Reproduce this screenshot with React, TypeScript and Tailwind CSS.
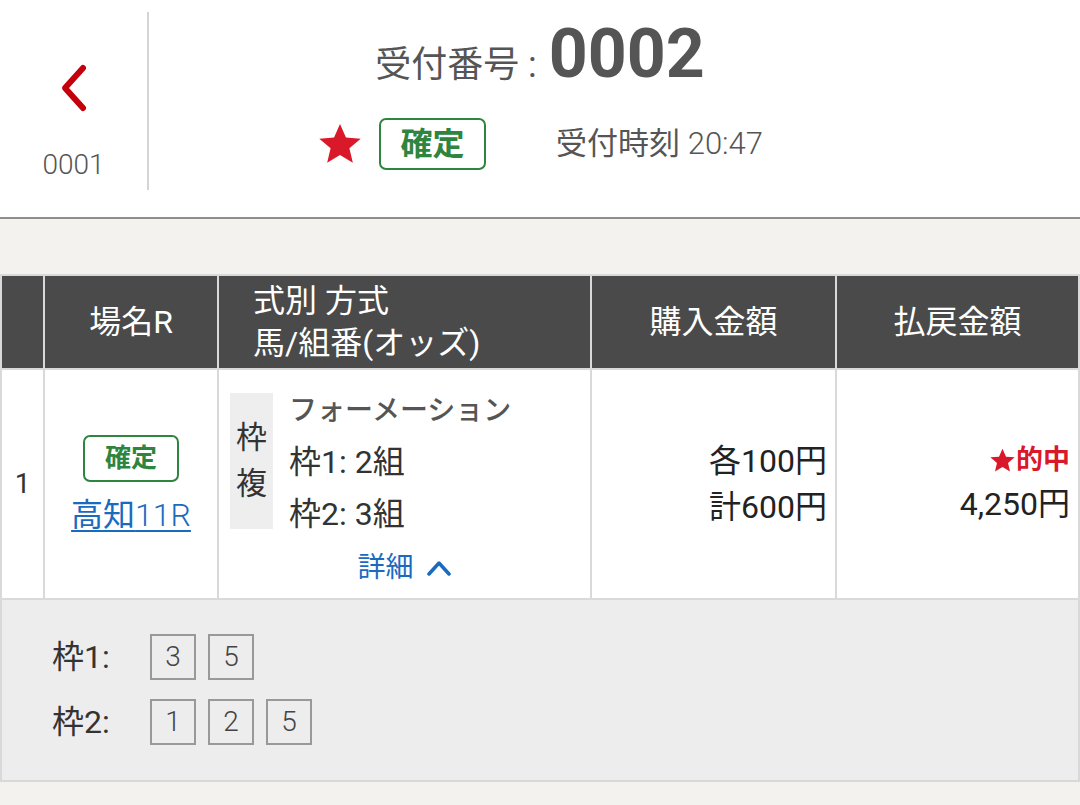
import React from 'react'

const font = { fontFamily: 'Roboto, "Noto Sans CJK JP", sans-serif' }

function Star({ className }: { className?: string }) {
  return (
    <svg viewBox="0 0 24 24" className={className} fill="currentColor">
      <path d="M12 1.5l3.1 7.1 7.7.6-5.9 5 1.8 7.6L12 17.8l-6.7 4 1.8-7.6-5.9-5 7.7-.6z" />
    </svg>
  )
}

function Badge({ small }: { small?: boolean }) {
  return (
    <span
      className={
        small
          ? 'inline-flex items-center justify-center w-[96px] h-[47px] rounded-[7px] border-2 border-[#2e8540] text-[#2e8540] text-[26px] font-bold'
          : 'inline-flex items-center justify-center w-[107px] h-[52px] rounded-[7px] border-2 border-[#2e8540] text-[#2e8540] text-[32px] font-bold'
      }
    >
      確定
    </span>
  )
}

function NumBox({ n }: { n: number }) {
  return (
    <span className="w-[46px] h-[46px] border-2 border-[#999] flex items-center justify-center text-[28px] text-[#444] font-light">
      {n}
    </span>
  )
}

export default function App() {
  return (
    <div className="w-[1080px] h-[805px] bg-[#f3f2ee] overflow-hidden" style={font}>
      <header className="h-[219px] bg-white border-b-2 border-[#8e8e8e] flex">
        <div className="w-[147px] flex flex-col items-center pt-[63px]">
          <svg viewBox="0 0 30 50" className="w-[30px] h-[50px] text-[#c4000b]" fill="none" stroke="currentColor" strokeWidth="6" strokeLinecap="round" strokeLinejoin="round">
            <path d="M24 5 L6 25 L24 45" />
          </svg>
          <span className="mt-[38px] text-[28px] font-light text-[#555] leading-none">0001</span>
        </div>
        <div className="mt-[12px] h-[178px] w-[2px] bg-[#d4d4d4]" />
        <div className="flex-1 pr-[149px] flex flex-col items-center">
          <div className="flex items-baseline mt-[20px] text-[#555]">
            <span className="text-[36px]">受付番号 :</span>
            <span className="ml-[12px] text-[68px] font-bold leading-none">0002</span>
          </div>
          <div className="flex items-center mt-[26px]">
            <Star className="w-[46px] h-[46px] text-[#d9182a]" />
            <span className="ml-[16px]">
              <Badge />
            </span>
            <span className="ml-[70px] text-[31px] text-[#555]">
              受付時刻 <span className="font-light">20:47</span>
            </span>
          </div>
        </div>
      </header>

      <div className="mt-[55px] bg-[#d9d9d9] p-[2px] grid grid-cols-[41px_172px_371px_243px_1fr] gap-[2px]">
        <div className="bg-[#4a4a4a] h-[92px]" />
        <div className="bg-[#4a4a4a] flex items-center justify-center text-white text-[32px]">場名R</div>
        <div className="bg-[#4a4a4a] flex flex-col justify-center pl-[34px] text-white text-[32px] leading-[42px]">
          <span>式別 方式</span>
          <span>馬/組番(オッズ)</span>
        </div>
        <div className="bg-[#4a4a4a] flex items-center justify-center text-white text-[32px]">購入金額</div>
        <div className="bg-[#4a4a4a] flex items-center justify-center text-white text-[32px]">払戻金額</div>

        <div className="bg-white h-[228px] flex items-center justify-center text-[28px] text-[#333]">1</div>
        <div className="bg-white flex flex-col items-center justify-center">
          <Badge small />
          <a className="mt-[14px] text-[32px] leading-[38px] text-[#1a6bc0] underline underline-offset-[4px] decoration-2">
            高知<span className="font-light">11R</span>
          </a>
        </div>
        <div className="bg-white pl-[11px] pt-[23px] flex flex-col">
          <div className="flex">
            <div className="w-[43px] h-[136px] bg-[#eeeeee] flex flex-col items-center justify-center text-[31px] leading-[46px] text-[#333]">
              <span>枠</span>
              <span>複</span>
            </div>
            <div className="ml-[16px] flex flex-col -mt-[4px]">
              <span className="text-[28px] font-medium text-[#555] leading-[44px]">フォーメーション</span>
              <span className="mt-[4px] text-[32px] text-[#333] leading-[50px]">枠1: 2組</span>
              <span className="text-[32px] text-[#333] leading-[54px]">枠2: 3組</span>
            </div>
          </div>
          <div className="mt-[6px] pr-[11px] flex items-center justify-center text-[28px] text-[#1a6bc0]">
            <span>詳細</span>
            <svg viewBox="0 0 26 16" className="ml-[12px] w-[26px] h-[16px]" fill="none" stroke="currentColor" strokeWidth="3.5" strokeLinecap="round" strokeLinejoin="round">
              <path d="M3 14 L13 3 L23 14" />
            </svg>
          </div>
        </div>
        <div className="bg-white flex flex-col items-end justify-center pr-[8px] text-[32px] text-[#222] leading-[46px]">
          <span>各100円</span>
          <span>計600円</span>
        </div>
        <div className="bg-white flex flex-col items-end justify-center pr-[8px] text-[#222]">
          <span className="flex items-center text-[27px] font-bold text-[#d9182a] leading-[40px]">
            <Star className="w-[27px] h-[27px]" />
            的中
          </span>
          <span className="text-[32px] leading-[48px]">4,250円</span>
        </div>

        <div className="col-span-5 bg-[#ededed] h-[180px] pl-[50px] pt-[33px] flex flex-col gap-[17px]">
          <div className="flex items-center">
            <span className="w-[98px] text-[32px] text-[#333]">枠1:</span>
            <div className="flex gap-[12px]">
              <NumBox n={3} />
              <NumBox n={5} />
            </div>
          </div>
          <div className="flex items-center">
            <span className="w-[98px] text-[32px] text-[#333]">枠2:</span>
            <div className="flex gap-[12px]">
              <NumBox n={1} />
              <NumBox n={2} />
              <NumBox n={5} />
            </div>
          </div>
        </div>
      </div>
    </div>
  )
}
